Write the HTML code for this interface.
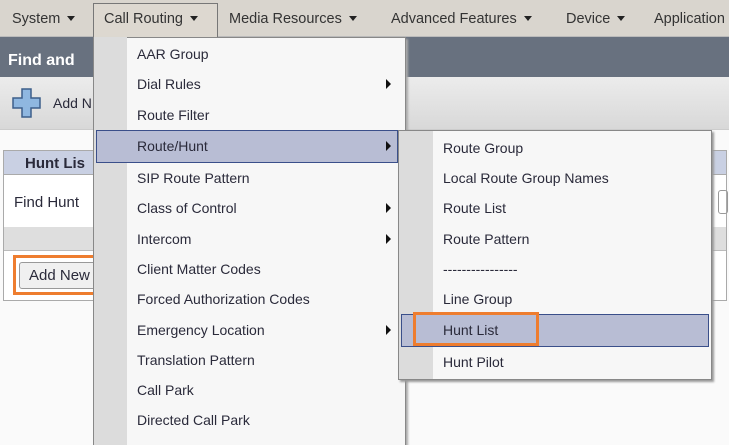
<!DOCTYPE html>
<html style="width:729px;height:445px;overflow:hidden"><head><style>
*{margin:0;padding:0;box-sizing:border-box}
body{width:729px;height:445px;overflow:hidden;background:#fafafa;font-family:"Liberation Sans",Arial,sans-serif;font-size:14px;color:#2a2a3a;position:relative}
.a{position:absolute}
.mb{left:0;top:0;width:729px;height:37px;background:#d9d5ce;border-bottom:1px solid #bbb}
.mi{position:absolute;top:11px;font-size:14.5px;color:#333}
.tri{display:inline-block;width:0;height:0;border-left:4px solid transparent;border-right:4px solid transparent;border-top:5px solid #222;margin-left:7px;vertical-align:2px}
.it{position:absolute;left:137px;font-size:14px;color:#2a2a3a}
.st{position:absolute;left:443px;font-size:14px;color:#2a2a3a}
.ar{position:absolute;width:0;height:0;border-top:5px solid transparent;border-bottom:5px solid transparent;border-left:5px solid #111}
</style></head><body>
<div class="a mb"></div>
<div class="mi" style="left:12px">System<span class="tri"></span></div>
<div class="a" style="left:93px;top:3px;width:125px;height:34px;border:1px solid #777;border-bottom:none;background:#ddd8d0"></div>
<div class="mi" style="left:104px">Call Routing<span class="tri"></span></div>
<div class="mi" style="left:229px">Media Resources<span class="tri"></span></div>
<div class="mi" style="left:391px">Advanced Features<span class="tri"></span></div>
<div class="mi" style="left:566px">Device<span class="tri"></span></div>
<div class="mi" style="left:654px">Application</div>
<div class="a" style="left:0;top:37px;width:729px;height:40px;background:#68717f"></div>
<div class="a" style="left:8px;top:52px;color:#fff;font-weight:bold;font-size:16px">Find and</div>
<div class="a" style="left:0;top:77px;width:729px;height:53px;background:linear-gradient(#ececec,#d8d8d8);border-bottom:1px solid #ccc"></div>
<svg class="a" style="left:12px;top:88px" width="29" height="30" viewBox="0 0 29 30"><path d="M10 1h9v9h9v10h-9v9h-9v-9H1V10h9z" fill="#8fb7e0" stroke="#3d5f8a" stroke-width="1.5"/></svg>
<div class="a" style="left:53px;top:95px;font-size:14px">Add N</div>
<div class="a" style="left:3px;top:150px;width:724px;height:151px;border:1px solid #aaa;background:#fff"></div>
<div class="a" style="left:4px;top:151px;width:722px;height:24px;background:#c9d0e3;border-bottom:1px solid #aaa"></div>
<div class="a" style="left:25px;top:155px;font-weight:bold;font-size:15px">Hunt Lis</div>
<div class="a" style="left:14px;top:194px;font-size:15px">Find Hunt</div>
<div class="a" style="left:4px;top:227px;width:722px;height:24px;background:#dedede;border-bottom:1px solid #bbb"></div>
<div class="a" style="left:13px;top:255px;width:83px;height:40px;border:3px solid #ee7d2f"></div>
<div class="a" style="left:19px;top:262px;width:80px;height:27px;border:1px solid #999;border-radius:3px;background:#f0f0f0"></div>
<div class="a" style="left:29px;top:267px;font-size:15px">Add New</div>
<div class="a" style="left:718px;top:190px;width:10px;height:24px;border:1px solid #999;border-radius:3px"></div>
<div class="a" style="left:93px;top:37px;width:313px;height:420px;background:#f7f7f7;border:1px solid #888;box-shadow:2px 2px 2px #aaa"></div>
<div class="a" style="left:94px;top:37px;width:33px;height:410px;background:#dcdcdc"></div>
<div class="a" style="left:96px;top:130px;width:302px;height:33px;background:#b8bdd4;border:1px solid #3a4f8a"></div>
<div class="it" style="top:46px">AAR Group</div>
<div class="it" style="top:76px">Dial Rules</div><div class="ar" style="left:386px;top:79px"></div>
<div class="it" style="top:107px">Route Filter</div>
<div class="it" style="top:138px">Route/Hunt</div><div class="ar" style="left:386px;top:141px"></div>
<div class="it" style="top:170px">SIP Route Pattern</div>
<div class="it" style="top:200px">Class of Control</div><div class="ar" style="left:386px;top:203px"></div>
<div class="it" style="top:231px">Intercom</div><div class="ar" style="left:386px;top:234px"></div>
<div class="it" style="top:261px">Client Matter Codes</div>
<div class="it" style="top:291px">Forced Authorization Codes</div>
<div class="it" style="top:322px">Emergency Location</div><div class="ar" style="left:386px;top:325px"></div>
<div class="it" style="top:352px">Translation Pattern</div>
<div class="it" style="top:382px">Call Park</div>
<div class="it" style="top:412px">Directed Call Park</div>
<div class="a" style="left:398px;top:130px;width:314px;height:250px;background:#f7f7f7;border:1px solid #888;box-shadow:2px 2px 2px #999"></div>
<div class="a" style="left:399px;top:131px;width:34px;height:248px;background:#dcdcdc"></div>
<div class="a" style="left:401px;top:314px;width:308px;height:33px;background:#b8bdd4;border:1px solid #3a4f8a"></div>
<div class="a" style="left:413px;top:312px;width:126px;height:34px;border:3px solid #ee7d2f"></div>
<div class="st" style="top:140px">Route Group</div>
<div class="st" style="top:170px">Local Route Group Names</div>
<div class="st" style="top:200px">Route List</div>
<div class="st" style="top:231px">Route Pattern</div>
<div class="st" style="top:261px">----------------</div>
<div class="st" style="top:291px">Line Group</div>
<div class="st" style="top:322px">Hunt List</div>
<div class="st" style="top:354px">Hunt Pilot</div>
</body></html>
